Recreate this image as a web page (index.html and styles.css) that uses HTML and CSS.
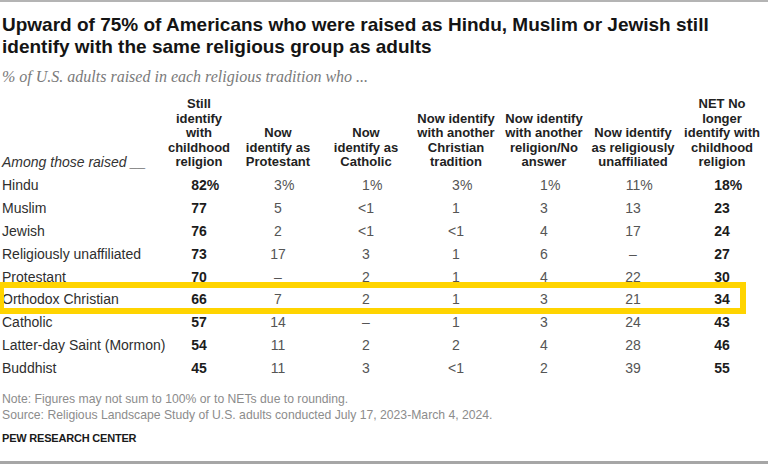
FILE: index.html
```html
<!DOCTYPE html>
<html lang="en">
<head>
<meta charset="utf-8">
<title>Pew Research Center – religious retention</title>
<link rel="stylesheet" href="styles.css">
</head>
<body>
<div class="page">
  <h1 class="title">Upward of 75% of Americans who were raised as Hindu, Muslim or Jewish still identify with the same religious group as adults</h1>
  <p class="subtitle">% of U.S. adults raised in each religious tradition who ...</p>

  <div class="table">
    <div class="row head">
      <div class="label among">Among those raised __</div>
      <div class="h">Still<br>identify<br>with<br>childhood<br>religion</div>
      <div class="h">Now<br>identify as<br>Protestant</div>
      <div class="h">Now<br>identify as<br>Catholic</div>
      <div class="h">Now identify<br>with another<br>Christian<br>tradition</div>
      <div class="h">Now identify<br>with another<br>religion/No<br>answer</div>
      <div class="h">Now identify<br>as religiously<br>unaffiliated</div>
      <div class="h">NET No<br>longer<br>identify with<br>childhood<br>religion</div>
    </div>

    <div class="row">
      <div class="label">Hindu</div>
      <div class="n b">82<span class="pct">%</span></div>
      <div class="n">3<span class="pct">%</span></div>
      <div class="n">1<span class="pct">%</span></div>
      <div class="n">3<span class="pct">%</span></div>
      <div class="n">1<span class="pct">%</span></div>
      <div class="n">11<span class="pct">%</span></div>
      <div class="n b">18<span class="pct">%</span></div>
    </div>
    <div class="row">
      <div class="label">Muslim</div>
      <div class="n b">77</div><div class="n">5</div><div class="n">&lt;1</div><div class="n">1</div><div class="n">3</div><div class="n">13</div><div class="n b">23</div>
    </div>
    <div class="row">
      <div class="label">Jewish</div>
      <div class="n b">76</div><div class="n">2</div><div class="n">&lt;1</div><div class="n">&lt;1</div><div class="n">4</div><div class="n">17</div><div class="n b">24</div>
    </div>
    <div class="row">
      <div class="label">Religiously unaffiliated</div>
      <div class="n b">73</div><div class="n">17</div><div class="n">3</div><div class="n">1</div><div class="n">6</div><div class="n">–</div><div class="n b">27</div>
    </div>
    <div class="row">
      <div class="label">Protestant</div>
      <div class="n b">70</div><div class="n">–</div><div class="n">2</div><div class="n">1</div><div class="n">4</div><div class="n">22</div><div class="n b">30</div>
    </div>
    <div class="row highlight">
      <div class="label">Orthodox Christian</div>
      <div class="n b">66</div><div class="n">7</div><div class="n">2</div><div class="n">1</div><div class="n">3</div><div class="n">21</div><div class="n b">34</div>
    </div>
    <div class="row">
      <div class="label">Catholic</div>
      <div class="n b">57</div><div class="n">14</div><div class="n">–</div><div class="n">1</div><div class="n">3</div><div class="n">24</div><div class="n b">43</div>
    </div>
    <div class="row">
      <div class="label">Latter-day Saint (Mormon)</div>
      <div class="n b">54</div><div class="n">11</div><div class="n">2</div><div class="n">2</div><div class="n">4</div><div class="n">28</div><div class="n b">46</div>
    </div>
    <div class="row">
      <div class="label">Buddhist</div>
      <div class="n b">45</div><div class="n">11</div><div class="n">3</div><div class="n">&lt;1</div><div class="n">2</div><div class="n">39</div><div class="n b">55</div>
    </div>
  </div>

  <div class="notes">
    <p>Note: Figures may not sum to 100% or to NETs due to rounding.</p>
    <p>Source: Religious Landscape Study of U.S. adults conducted July 17, 2023-March 4, 2024.</p>
  </div>
  <div class="brand">PEW RESEARCH CENTER</div>
</div>
</body>
</html>
```

FILE: styles.css
```css
* { box-sizing: border-box; }

html, body {
  margin: 0;
  padding: 0;
  background: #ffffff;
  overflow: hidden;
}

.page {
  width: 768px;
  height: 464px;
  border-top: 2px solid #b4b4b4;
  border-bottom: 3px solid #a6a6a6;
  display: flex;
  flex-direction: column;
  font-family: "Liberation Sans", Arial, sans-serif;
  color: #2a2a2a;
}

.title {
  margin: 12px 0 0 0;
  padding-left: 2px;
  max-width: 740px;
  font-size: 19px;
  line-height: 22px;
  font-weight: 700;
  color: #141414;
}

.subtitle {
  margin: 9px 0 0 0;
  padding-left: 2px;
  font-family: "Liberation Serif", "Times New Roman", serif;
  font-style: italic;
  font-size: 16px;
  line-height: 20px;
  color: #7a7a7a;
}

.table {
  margin-top: 10px;
  display: flex;
  flex-direction: column;
}

.row {
  display: grid;
  grid-template-columns: 160px 78px 80px 96px 84px 92px 86px 92px;
  height: 22.9px;
  align-items: center;
  font-size: 14px;
  line-height: 16px;
}

.row.head {
  height: auto;
  align-items: end;
  margin-bottom: 4px;
}

.label {
  padding-left: 2px;
  white-space: nowrap;
  color: #2e2e2e;
}

.among {
  font-style: italic;
  font-size: 14px;
  line-height: 14.5px;
  color: #333333;
}

.h {
  justify-self: center;
  text-align: center;
  white-space: nowrap;
  font-size: 13px;
  line-height: 14.5px;
  font-weight: 700;
  color: #222222;
}

.n {
  justify-self: center;
  text-align: center;
  white-space: nowrap;
  color: #555555;
}

.n.b {
  font-weight: 700;
  color: #1c1c1c;
}

.pct {
  display: inline-block;
  width: 0;
}

.highlight {
  position: relative;
}

.highlight::after {
  content: "";
  position: absolute;
  left: -2px;
  right: 22px;
  top: -6px;
  bottom: -3px;
  border: 6px solid #ffd400;
  pointer-events: none;
}

.notes {
  margin-top: 11px;
  padding-left: 2px;
  font-size: 12.2px;
  line-height: 16px;
  color: #8c8c8c;
}

.notes p {
  margin: 0;
}

.brand {
  margin-top: 7px;
  padding-left: 2px;
  font-size: 11px;
  line-height: 16px;
  font-weight: 700;
  color: #1a1a1a;
  letter-spacing: -0.2px;
}
```
